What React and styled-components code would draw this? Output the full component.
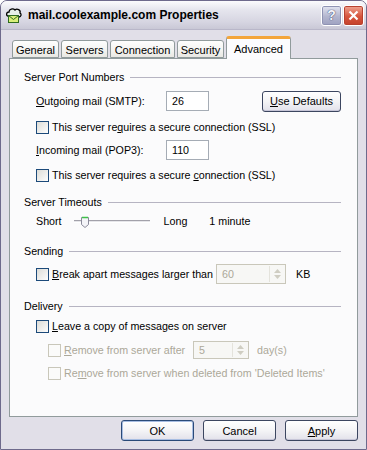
import React from 'react';
import styled, { createGlobalStyle } from 'styled-components';

const Global = createGlobalStyle`
  html, body { margin: 0; padding: 0; background: #fff; }
  body { font-family: "Liberation Sans", Arial, sans-serif; font-size: 10.7px; color: #000; }
`;

const Window = styled.div`
  width: 367px;
  height: 450px;
  box-sizing: border-box;
  border: 1px solid #6e6a8c;
  border-radius: 7px 7px 0 0;
  background: #e1dfe8;
  display: flex;
  flex-direction: column;
  overflow: hidden;
`;

const TitleBar = styled.div`
  height: 28px;
  flex: none;
  display: flex;
  align-items: center;
  padding: 0 2px 0 4px;
  background: linear-gradient(#fbfbfd 0%, #e6e6ee 30%, #d6d5e1 75%, #c9c8d6 100%);
  border-bottom: 1px solid #b9b7c9;
`;

const Title = styled.div`
  flex: 1;
  margin-left: 5px;
  font-weight: bold;
  font-size: 12px;
  color: #000;
`;

const CaptionButton = styled.div`
  width: 21px;
  height: 21px;
  box-sizing: border-box;
  margin-left: 1px;
  border: 1px solid #fff;
  border-radius: 3px;
  display: flex;
  align-items: center;
  justify-content: center;
  font-weight: bold;
  font-size: 14px;
  color: #f4f4fa;
  text-shadow: 0 0 1px #3d4466, 0 0 1px #3d4466;
  background: ${p => p.close
    ? 'linear-gradient(#f0a592, #d6553d 55%, #c4412b)'
    : 'linear-gradient(#e3e5f1, #b3b6cf 55%, #9ea1c0)'};
  box-shadow: inset 0 0 0 1px ${p => (p.close ? '#b8412f' : '#8f93b3')};
`;

const Body = styled.div`
  flex: 1;
  display: flex;
  flex-direction: column;
  padding: 6px 8px 0 8px;
`;

const TabRow = styled.div`
  display: flex;
  align-items: flex-end;
  height: 22px;
  padding-left: 3px;
  position: relative;
  z-index: 1;
`;

const Tab = styled.div`
  box-sizing: border-box;
  width: ${p => p.w}px;
  margin-right: 2px;
  height: ${p => (p.active ? 23 : 18)}px;
  margin-bottom: ${p => (p.active ? -1 : 0)}px;
  display: flex;
  align-items: center;
  justify-content: center;
  font-size: 11px;
  padding-top: ${p => (p.active ? 0 : 1)}px;
  border: 1px solid #919b9c;
  border-bottom: ${p => (p.active ? 'none' : '1px solid #919b9c')};
  border-top: ${p => (p.active ? '3px solid #f3a53b' : '1px solid #919b9c')};
  border-radius: 3px 3px 0 0;
  background: ${p => (p.active ? '#fcfcfe' : 'linear-gradient(#fefefe, #f3f3f0 60%, #e9e8e3)')};
`;

const Panel = styled.div`
  height: 359px;
  box-sizing: border-box;
  border: 1px solid #919b9c;
  background: #fbfbfc;
  padding: 11px 16px 0 14px;
  display: flex;
  flex-direction: column;
`;

const GroupHead = styled.div`
  display: flex;
  align-items: center;
  height: 14px;
  margin-top: ${p => p.mt || 0}px;
  &::after {
    content: '';
    flex: 1;
    height: 1px;
    margin-left: 6px;
    background: #b6b4c2;
  }
`;

const Row = styled.div`
  display: flex;
  align-items: center;
  height: ${p => p.h || 20}px;
  margin-top: ${p => p.mt || 0}px;
  padding-left: ${p => p.indent || 12}px;
  color: ${p => (p.disabled ? '#aca899' : '#000')};
`;

const Label = styled.span`
  width: ${p => (p.w ? p.w + 'px' : 'auto')};
  margin-left: ${p => p.ml || 0}px;
  flex: none;
  white-space: nowrap;
`;

const TextBox = styled.div`
  box-sizing: border-box;
  width: ${p => p.w}px;
  height: ${p => p.h || 20}px;
  border: 1px solid ${p => (p.disabled ? '#c9c7ba' : '#a5acb5')};
  background: ${p => (p.disabled ? '#f7f7f5' : '#fff')};
  color: ${p => (p.disabled ? '#aca899' : '#000')};
  display: flex;
  align-items: center;
  padding-left: 5px;
  position: relative;
  flex: none;
`;

const Spinner = styled.div`
  position: absolute;
  right: 1px;
  top: 1px;
  bottom: 1px;
  width: 14px;
  display: flex;
  flex-direction: column;
  justify-content: center;
  align-items: center;
  gap: 2px;
  border-left: 1px solid #e4e3dc;
`;

const Button = styled.button`
  box-sizing: border-box;
  width: ${p => p.w}px;
  height: 21px;
  margin-left: ${p => (p.auto ? 'auto' : '0')};
  padding: 0;
  font-family: inherit;
  font-size: 11px;
  color: #000;
  border: 1px solid ${p => (p.focus ? '#2a4a78' : '#3c4660')};
  border-radius: 3px;
  background: linear-gradient(#ffffff, #f4f4f6 50%, #e2e1ea);
  box-shadow: ${p => (p.focus ? 'inset 0 0 0 1px #a7bde2' : 'inset 0 -1px 0 #c6c5d7')};
`;

const Box = styled.span`
  box-sizing: border-box;
  width: 13px;
  height: 13px;
  flex: none;
  border: 1px solid ${p => (p.disabled ? '#c9c7ba' : '#1c4a7a')};
  background: ${p => (p.disabled ? '#fbfbfa' : 'linear-gradient(135deg, #dcdcd7, #fdfdfd)')};
  margin-right: ${p => p.gap || 3}px;
`;

const Footer = styled.div`
  display: flex;
  justify-content: flex-end;
  gap: 9px;
  padding: 3px 0 0 0;
`;

const Track = styled.div`
  width: 76px;
  height: 3px;
  box-sizing: border-box;
  margin: 0 14px 0 12px;
  border-top: 1px solid #a2a1aa;
  border-bottom: 1px solid #fff;
  background: #e6e6ea;
  position: relative;
  flex: none;
  & > svg { position: absolute; top: -5px; left: 7px; }
`;

const MailIcon = () => (
  <svg width="18" height="17" viewBox="0 0 18 17">
    <path d="M3 9 C1 9 1 5 4 5 C4 2 8 1 10 3 C12 1 16 3 15 6 C17 7 16 10 14 10" fill="#e6f0e8" stroke="#000" strokeWidth="1.3" />
    <rect x="3.5" y="8.5" width="10" height="7" fill="#d9ef7a" stroke="#2f6b1f" />
    <path d="M3.5 8.5 L8.5 12.5 L13.5 8.5" fill="none" stroke="#2f6b1f" />
  </svg>
);

const Thumb = () => (
  <svg width="8" height="12" viewBox="0 0 8 12">
    <path d="M0.5 1.5 H7.5 V8.5 L4 11.5 L0.5 8.5 Z" fill="#f4f4f8" stroke="#8a8a9a" />
    <line x1="1" y1="1.5" x2="7" y2="1.5" stroke="#3fc04a" strokeWidth="1.5" />
  </svg>
);

const Arrow = ({ up }) => (
  <svg width="7" height="4" viewBox="0 0 7 4">
    <path d={up ? 'M0 4 L3.5 0 L7 4 Z' : 'M0 0 L3.5 4 L7 0 Z'} fill="#cfcdc2" />
  </svg>
);

const tabs = [
  ['General', 47], ['Servers', 47], ['Connection', 65], ['Security', 47], ['Advanced', 65],
];

export default function App() {
  return (
    <>
      <Global />
      <Window>
        <TitleBar>
          <MailIcon />
          <Title>mail.coolexample.com Properties</Title>
          <CaptionButton>?</CaptionButton>
          <CaptionButton close>
            <svg width="11" height="11" viewBox="0 0 11 11">
              <path d="M1.5 1.5 L9.5 9.5 M9.5 1.5 L1.5 9.5" stroke="#fff" strokeWidth="2.2" />
            </svg>
          </CaptionButton>
        </TitleBar>
        <Body>
          <TabRow>
            {tabs.map(([t, w], i) => (
              <Tab key={t} w={w} active={i === 4}>{t}</Tab>
            ))}
          </TabRow>
          <Panel>
            <GroupHead>Server Port Numbers</GroupHead>
            <Row h={22} mt={6}>
              <Label w={130}><u>O</u>utgoing mail (SMTP):</Label>
              <TextBox w={43}>26</TextBox>
              <Button w={79} auto><u>U</u>se Defaults</Button>
            </Row>
            <Row mt={5}>
              <Box />
              <Label>This server re<u>q</u>uires a secure connection (SSL)</Label>
            </Row>
            <Row h={22} mt={2}>
              <Label w={130}><u>I</u>ncoming mail (POP3):</Label>
              <TextBox w={43}>110</TextBox>
            </Row>
            <Row mt={4}>
              <Box />
              <Label>This server requires a secure <u>c</u>onnection (SSL)</Label>
            </Row>

            <GroupHead mt={10}>Server Timeouts</GroupHead>
            <Row mt={2}>
              <Label>Short</Label>
              <Track><Thumb /></Track>
              <Label>Long</Label>
              <Label ml={22}>1 minute</Label>
            </Row>

            <GroupHead mt={13}>Sending</GroupHead>
            <Row mt={6}>
              <Box />
              <Label w={164}><u>B</u>reak apart messages larger than</Label>
              <TextBox w={70} disabled>60<Spinner><Arrow up /><Arrow /></Spinner></TextBox>
              <Label ml={10}>KB</Label>
            </Row>

            <GroupHead mt={15}>Delivery</GroupHead>
            <Row mt={3}>
              <Box />
              <Label><u>L</u>eave a copy of messages on server</Label>
            </Row>
            <Row mt={4} indent={24} disabled>
              <Box disabled />
              <Label w={129}><u>R</u>emove from server after</Label>
              <TextBox w={56} h={18} disabled>5<Spinner><Arrow up /><Arrow /></Spinner></TextBox>
              <Label ml={8}>day(s)</Label>
            </Row>
            <Row mt={3} indent={24} disabled>
              <Box disabled />
              <Label>Re<u>m</u>ove from server when deleted from 'Deleted Items'</Label>
            </Row>
          </Panel>
          <Footer>
            <Button w={73} focus>OK</Button>
            <Button w={73}>Cancel</Button>
            <Button w={73}><u>A</u>pply</Button>
          </Footer>
        </Body>
      </Window>
    </>
  );
}
